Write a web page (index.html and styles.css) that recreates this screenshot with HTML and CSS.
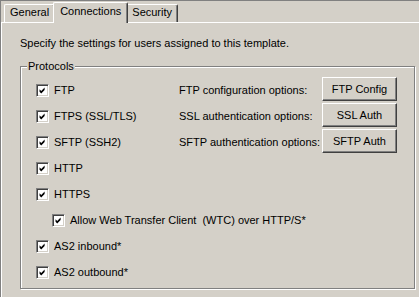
FILE: index.html
```html
<!DOCTYPE html>
<html lang="en">
<head>
    <meta charset="UTF-8">
    <title>Template properties - Connections</title>
    <link rel="stylesheet" href="styles.css">
</head>
<body>
    <div class="window">
        <div class="tabs">
            <div class="tab">General</div>
            <div class="tab active">Connections</div>
            <div class="tab">Security</div>
        </div>
        <div class="panel">
            <p class="intro">Specify the settings for users assigned to this template.</p>
            <div class="group">
                <span class="group-title">Protocols</span>
                <div class="group-grid">
                    <label class="check"><span class="box"><svg viewBox="0 0 13 13"><polygon points="3,5 5,7 9,3 9,6 5,10 3,8"/></svg></span>FTP</label>
                    <span class="opt-label">FTP configuration options:</span>
                    <span class="btn">FTP Config</span>

                    <label class="check"><span class="box"><svg viewBox="0 0 13 13"><polygon points="3,5 5,7 9,3 9,6 5,10 3,8"/></svg></span>FTPS (SSL/TLS)</label>
                    <span class="opt-label">SSL authentication options:</span>
                    <span class="btn">SSL Auth</span>

                    <label class="check"><span class="box"><svg viewBox="0 0 13 13"><polygon points="3,5 5,7 9,3 9,6 5,10 3,8"/></svg></span>SFTP (SSH2)</label>
                    <span class="opt-label">SFTP authentication options:</span>
                    <span class="btn">SFTP Auth</span>

                    <label class="check wide"><span class="box"><svg viewBox="0 0 13 13"><polygon points="3,5 5,7 9,3 9,6 5,10 3,8"/></svg></span>HTTP</label>
                    <label class="check wide"><span class="box"><svg viewBox="0 0 13 13"><polygon points="3,5 5,7 9,3 9,6 5,10 3,8"/></svg></span>HTTPS</label>
                    <label class="check wide sub"><span class="box"><svg viewBox="0 0 13 13"><polygon points="3,5 5,7 9,3 9,6 5,10 3,8"/></svg></span>Allow Web Transfer Client&nbsp; (WTC) over HTTP/S*</label>
                    <label class="check wide"><span class="box"><svg viewBox="0 0 13 13"><polygon points="3,5 5,7 9,3 9,6 5,10 3,8"/></svg></span>AS2 inbound*</label>
                    <label class="check wide"><span class="box"><svg viewBox="0 0 13 13"><polygon points="3,5 5,7 9,3 9,6 5,10 3,8"/></svg></span>AS2 outbound*</label>
                </div>
            </div>
        </div>
    </div>
</body>
</html>
```

FILE: styles.css
```css
body, html {
    margin: 0;
    padding: 0;
    background: #d4d0c8;
    font-family: "Liberation Sans", Arial, sans-serif;
    font-size: 11px;
    color: #000;
    overflow: hidden;
}

.window {
    width: 419px;
    height: 297px;
    box-sizing: border-box;
    border-top: 1px solid #808080;
    border-left: 1px solid #808080;
}

/* tab strip */
.tabs {
    display: flex;
    align-items: flex-end;
    height: 21px;
    padding-left: 3px;
    position: relative;
    z-index: 1;
}

.tab {
    height: 18px;
    line-height: 15px;
    padding: 0 5px;
    border: 1px solid #fff;
    border-right-color: #404040;
    border-bottom: none;
    border-radius: 2px 2px 0 0;
    box-shadow: inset -1px 0 0 #808080;
    box-sizing: border-box;
}

.tab.active {
    height: 21px;
    line-height: 17px;
    padding: 0 6px;
    margin: 0 -2px -1px;
    background: #d4d0c8;
    position: relative;
}

/* tab page */
.panel {
    border-top: 1px solid #fff;
    border-left: 1px solid #fff;
    height: 280px;
}

.intro {
    margin: 0;
    padding: 14px 0 0 18px;
    line-height: 13px;
}

.group {
    position: relative;
    margin: 16px 0 0 18px;
    width: 395px;
    height: 223px;
    box-sizing: border-box;
    border: 1px solid #808080;
    box-shadow: inset 1px 1px 0 #fff, 1px 1px 0 #fff;
}

.group-title {
    position: absolute;
    top: -7px;
    left: 6px;
    padding: 0 1px;
    line-height: 13px;
    background: #d4d0c8;
}

.group-grid {
    display: grid;
    grid-template-columns: 143px 143px 75px;
    grid-auto-rows: 26px;
    padding: 10px 0 0 15px;
}

.check {
    display: flex;
    align-items: center;
    gap: 5px;
    white-space: nowrap;
}

.check.wide {
    grid-column: 1 / -1;
}

.check.sub {
    padding-left: 16px;
}

.box {
    width: 13px;
    height: 13px;
    box-sizing: border-box;
    background: #fff;
    border: 1px solid;
    border-color: #808080 #fff #fff #808080;
    box-shadow: inset 1px 1px 0 #404040, inset -1px -1px 0 #d4d0c8;
    display: flex;
}

.box svg {
    width: 11px;
    height: 11px;
    fill: #000;
}

.opt-label {
    display: flex;
    align-items: center;
}

.btn {
    display: flex;
    align-items: center;
    justify-content: center;
    height: 24px;
    box-sizing: border-box;
    border: 1px solid;
    border-color: #fff #404040 #404040 #fff;
    box-shadow: inset -1px -1px 0 #808080;
}
```
